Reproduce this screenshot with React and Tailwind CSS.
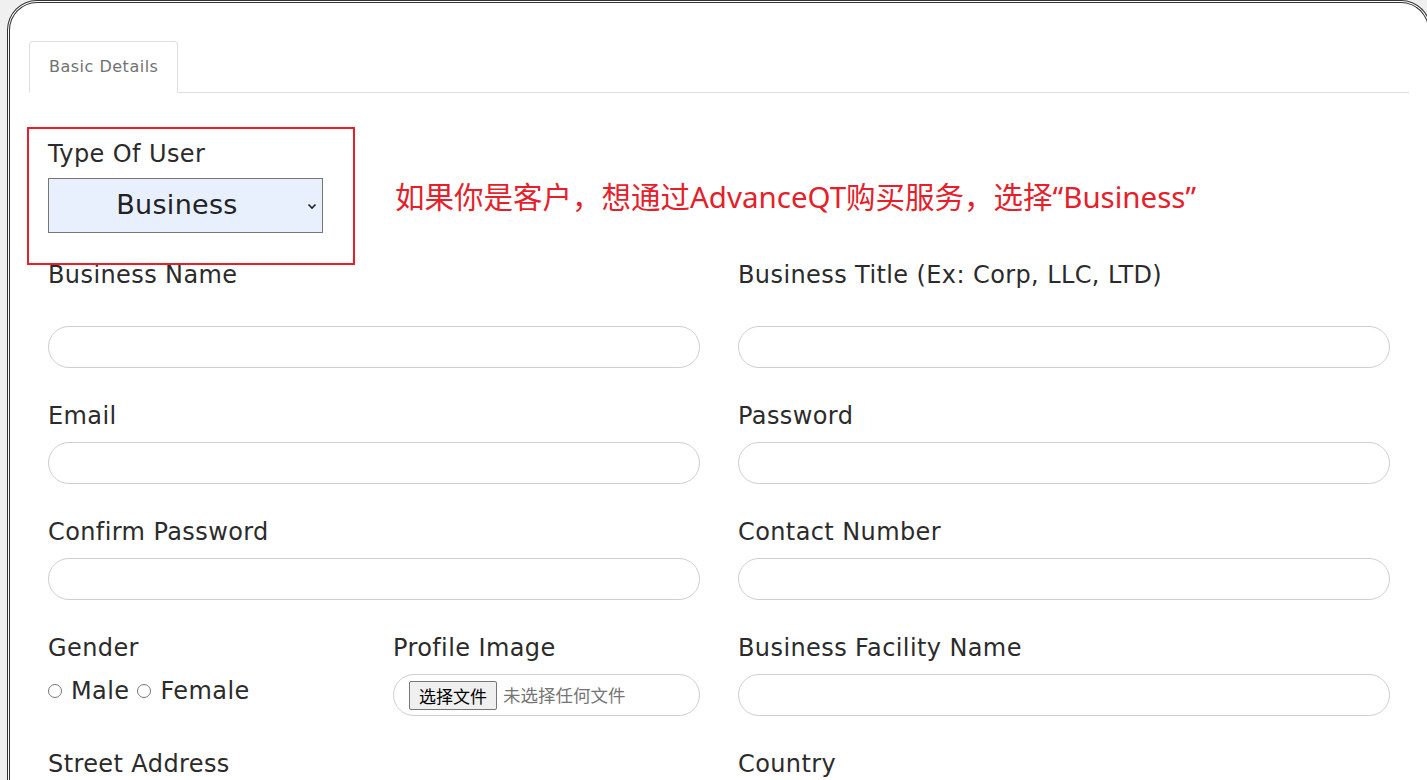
import React from 'react';

const labelFont = { fontFamily: '"DejaVu Sans", "Noto Sans CJK SC", sans-serif' };

function Label({ children, className = '' }) {
  return (
    <div className={`h-[36px] text-[24px] leading-[36px] tracking-[0.4px] text-[#2b2b2b] ${className}`}>{children}</div>
  );
}

function Field({ label, first }) {
  return (
    <div className="flex flex-col">
      <Label>{label}</Label>
      <input
        type="text"
        className={`${first ? 'mt-[33px]' : 'mt-[8px]'} h-[42px] rounded-full border border-[#cfcfcf] bg-white px-4 outline-none`}
      />
    </div>
  );
}

function Radio({ label }) {
  return (
    <label className="flex items-center">
      <span className="inline-block h-[14px] w-[14px] rounded-full border border-[#767676] bg-white" />
      <span className="ml-[9px]">{label}</span>
    </label>
  );
}

export default function App() {
  return (
    <div className="h-[780px] overflow-hidden bg-[#f0f0f0] pl-[7px]" style={labelFont}>
      <div className="h-[800px] w-[1424px] rounded-t-[30px] border-[3px] border-b-0 border-double border-[#333] bg-white px-[19px] pt-[38px]">
        {/* tabs */}
        <div className="flex border-b border-[#dedede]">
          <div className="-mb-px flex h-[52px] items-center rounded-t-[4px] border border-b-white border-[#dedede] bg-white px-[19px] text-[16px] tracking-[0.5px] text-[#727272]">
            Basic Details
          </div>
        </div>

        <div className="px-[19px]">
          {/* type of user */}
          <div className="relative mt-[43px]">
            <div className="pointer-events-none absolute left-[-21px] top-[-9px] h-[138px] w-[328px] border-2 border-[#e5202a]" />
            <div
              className="absolute left-[347px] top-[41px] whitespace-nowrap text-[29.5px] leading-[40px] text-[#e5202a]"
              style={{ fontFamily: '"Noto Sans", "Noto Sans CJK SC", sans-serif' }}
            >
              如果你是客户，想通过AdvanceQT购买服务，选择“Business”
            </div>
            <Label>Type Of User</Label>
            <div className="relative mt-[6px] flex h-[55px] w-[275px] items-center justify-center border border-[#767676] bg-[#e8f0fe] pr-[17px] text-[27px] font-medium tracking-[0.3px] text-[#222]">
              Business
              <svg className="absolute right-[5px] top-[24px]" width="10" height="7" viewBox="0 0 10 7">
                <path d="M1.5 1.5 L5 5 L8.5 1.5" fill="none" stroke="#222" strokeWidth="1.6" />
              </svg>
            </div>
          </div>

          {/* form grid */}
          <div className="mt-[24px] grid grid-cols-2 gap-x-[38px] gap-y-[30px]">
            <Field label="Business Name" first />
            <Field label="Business Title (Ex: Corp, LLC, LTD)" first />
            <Field label="Email" />
            <Field label="Password" />
            <Field label="Confirm Password" />
            <Field label="Contact Number" />

            <div className="grid grid-cols-2 gap-x-[38px]">
              <div className="flex flex-col">
                <Label>Gender</Label>
                <div className="mt-[8px] flex h-[34px] items-center gap-[8px] text-[24px] tracking-[0.4px] text-[#2b2b2b]">
                  <Radio label="Male" />
                  <Radio label="Female" />
                </div>
              </div>
              <div className="flex flex-col">
                <Label>Profile Image</Label>
                <div
                  className="mt-[8px] flex h-[42px] items-center rounded-full border border-[#cfcfcf] pl-[15px]"
                  style={{ fontFamily: '"Noto Sans CJK SC", sans-serif' }}
                >
                  <button className="h-[29px] rounded-[2px] border border-[#767676] bg-[#efefef] px-[9px] text-[17px] leading-none text-black">
                    选择文件
                  </button>
                  <span className="ml-[6px] text-[17.5px] text-[#757575]">未选择任何文件</span>
                </div>
              </div>
            </div>
            <Field label="Business Facility Name" />

            <Field label="Street Address" />
            <Field label="Country" />
          </div>
        </div>
      </div>
    </div>
  );
}
